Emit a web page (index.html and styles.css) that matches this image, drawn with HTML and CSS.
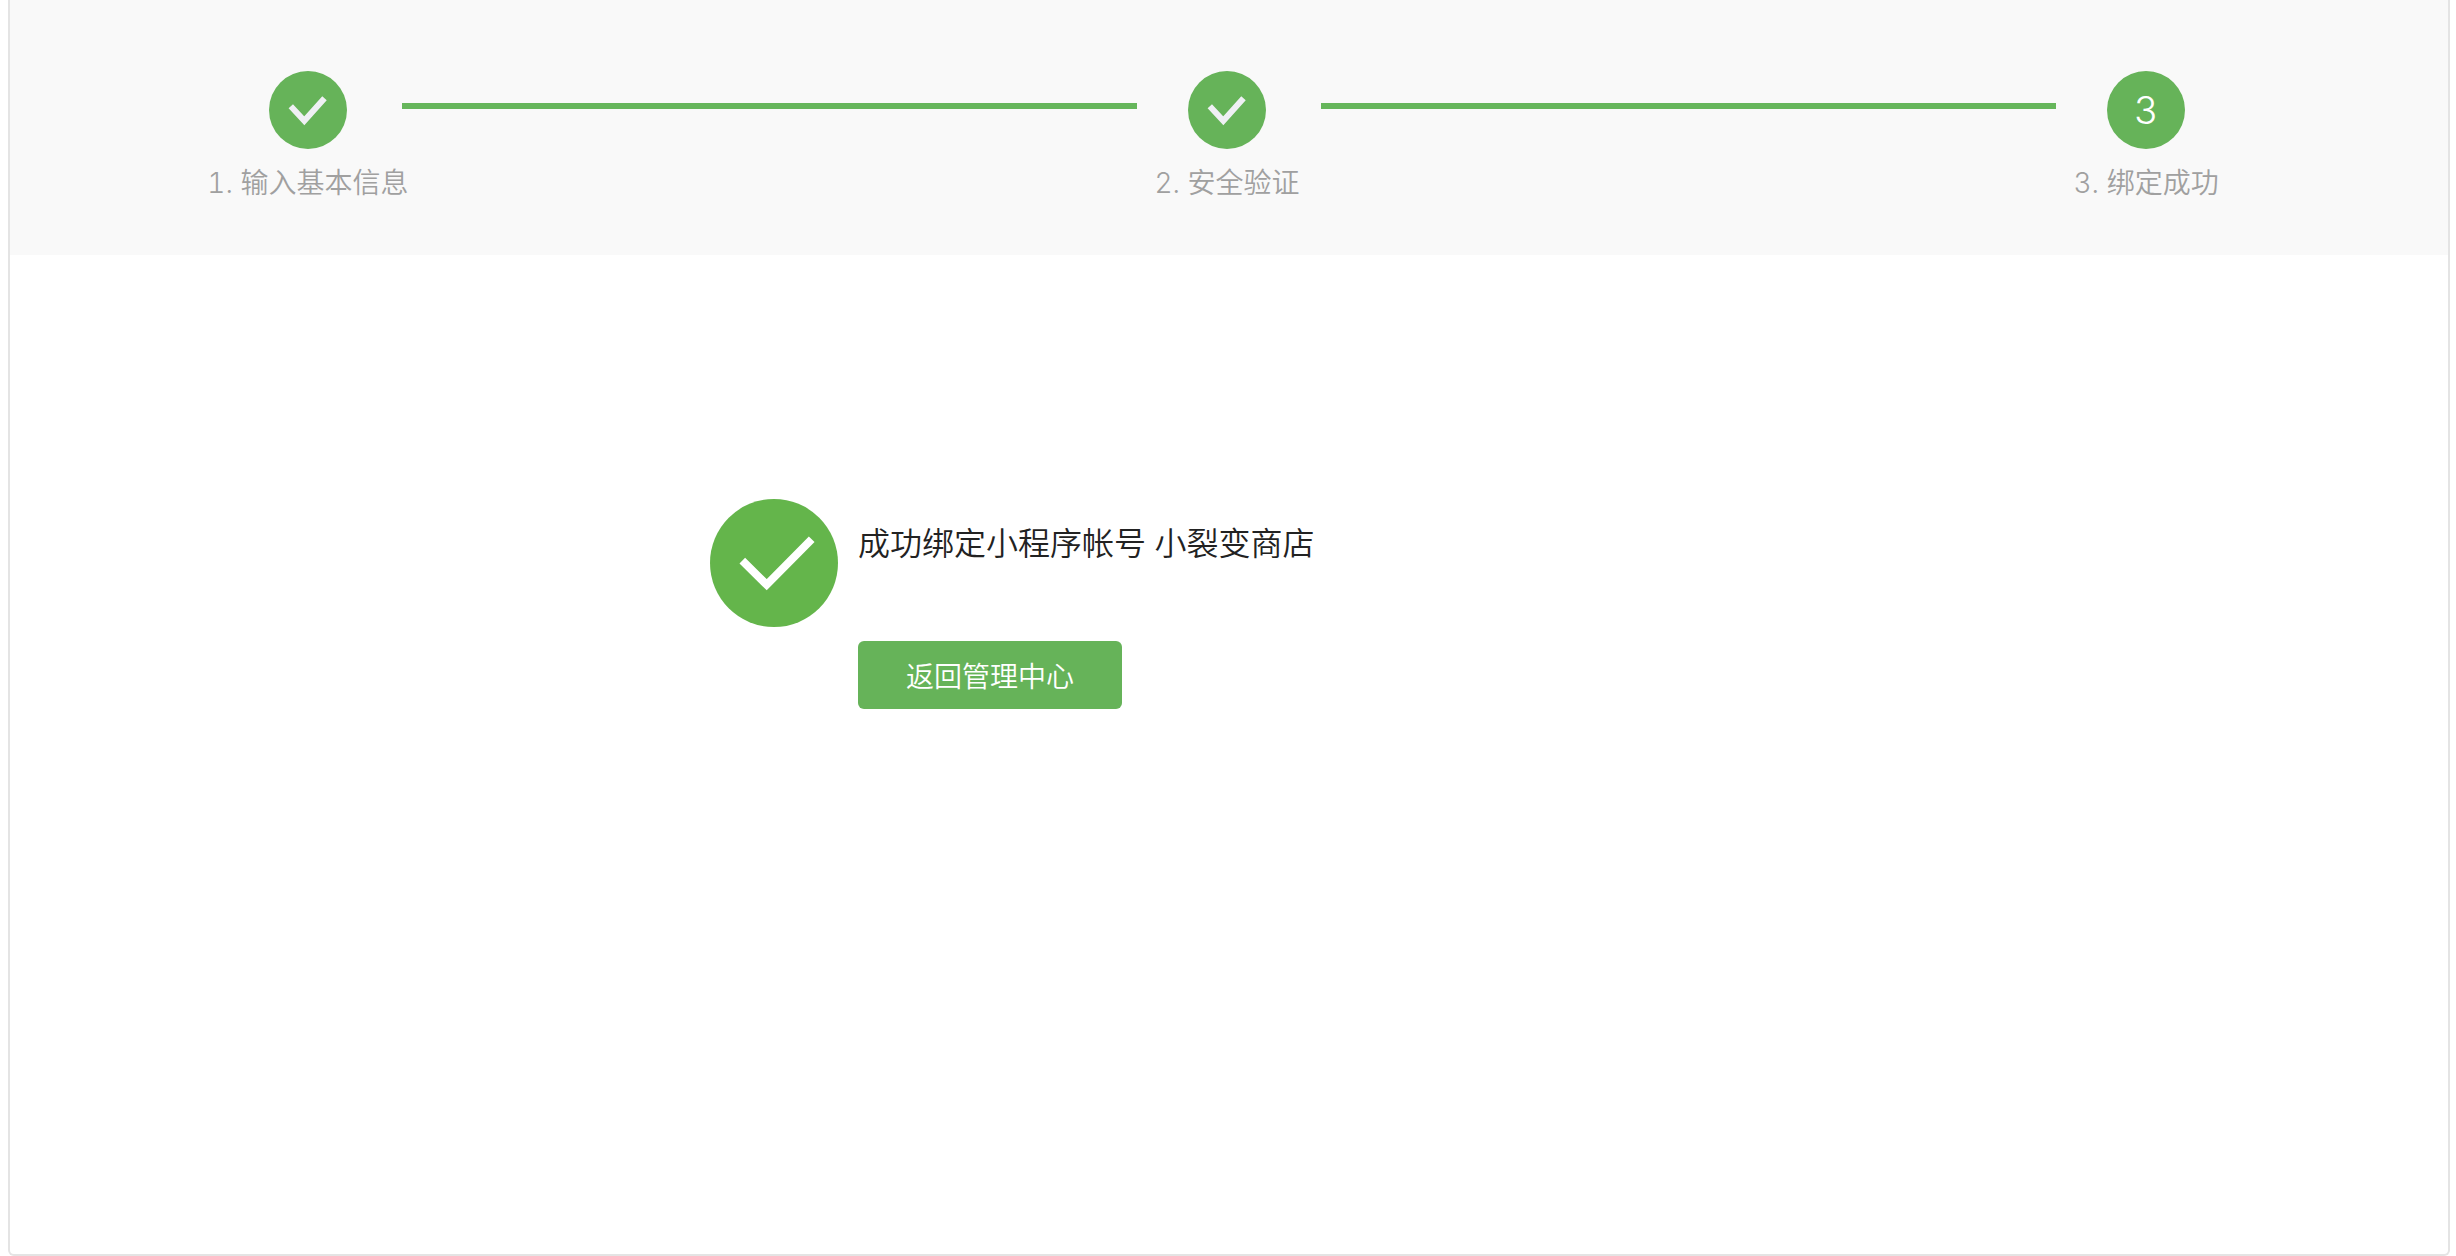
FILE: index.html
```html
<!DOCTYPE html>
<html lang="zh-CN">
<head>
<meta charset="utf-8">
<meta name="viewport" content="width=device-width, initial-scale=1">
<title>绑定成功</title>
<link rel="stylesheet" href="styles.css">
</head>
<body>
<main class="panel">
  <ol class="steps">
    <li class="step">
      <svg class="step-icon" viewBox="0 0 78 78" aria-hidden="true">
        <circle cx="39" cy="39" r="39"/>
        <path d="M21.8 35.3 35.3 49.8 55.5 27.2"/>
      </svg>
      <span class="step-label">1. 输入基本信息</span>
    </li>
    <li class="step-line" aria-hidden="true"></li>
    <li class="step">
      <svg class="step-icon" viewBox="0 0 78 78" aria-hidden="true">
        <circle cx="39" cy="39" r="39"/>
        <path d="M21.8 35.3 35.3 49.8 55.5 27.2"/>
      </svg>
      <span class="step-label">2. 安全验证</span>
    </li>
    <li class="step-line" aria-hidden="true"></li>
    <li class="step" aria-current="step">
      <span class="step-number">3</span>
      <span class="step-label">3. 绑定成功</span>
    </li>
  </ol>
  <section class="result">
    <svg class="result-icon" viewBox="0 0 128 128" aria-hidden="true">
      <circle cx="64" cy="64" r="64"/>
      <path d="M32.3 61.7 56.7 85.7 101.7 40.3"/>
    </svg>
    <div class="result-body">
      <h1 class="result-title">成功绑定小程序帐号 小裂变商店</h1>
      <button class="button" type="button">返回管理中心</button>
    </div>
  </section>
</main>
</body>
</html>
```

FILE: styles.css
```css
* {
  box-sizing: border-box;
}

body {
  margin: 0;
  background: #fff;
  color: #222;
  font-family: Inter, "Noto Sans CJK SC", sans-serif;
  font-weight: 350;
  font-variant-numeric: tabular-nums;
}

.panel {
  min-height: 100vh;
  margin: 0 6px 0 8px;
  border: 2px solid #e4e4e4;
  border-top: 0;
  border-radius: 0 0 6px 6px;
}

.steps {
  display: grid;
  grid-template-columns: 1fr 4fr 1fr 4fr 1fr;
  margin: 0;
  padding: 71px 208px 52px;
  background: #f9f9f9;
  list-style: none;
}

.step {
  display: flex;
  flex-direction: column;
  align-items: center;
  gap: 14px;
  min-width: 0;
  padding-right: 4px;
}

.step-icon,
.step-number {
  width: 78px;
  height: 78px;
}

.step-icon circle {
  fill: #66b359;
}

.step-icon path {
  fill: none;
  stroke: #eff0f4;
  stroke-width: 6;
}

.step-number {
  border-radius: 50%;
  background: #66b359;
  color: #fff;
  font-size: 38px;
  font-weight: 300;
  line-height: 78px;
  text-align: center;
}

.step-label {
  color: #a0a0a0;
  font-size: 28px;
  line-height: 40px;
  white-space: nowrap;
}

.step-line {
  height: 6px;
  margin-top: 32px;
  background: #66b65b;
}

.result {
  display: flex;
  gap: 20px;
  max-width: 1038px;
  margin: 0 auto;
  padding: 244px 0;
}

.result-icon {
  flex: none;
  width: 128px;
  height: 128px;
}

.result-icon circle {
  fill: #64b54b;
}

.result-icon path {
  fill: none;
  stroke: #fff;
  stroke-width: 8;
}

.result-title {
  margin: 20px 0 72px;
  font-size: 32px;
  font-weight: 350;
  line-height: 50px;
}

.button {
  height: 68px;
  padding: 0 48px;
  border: 0;
  border-radius: 6px;
  background: #66b359;
  color: #fff;
  font: inherit;
  font-size: 28px;
  cursor: pointer;
}
```
